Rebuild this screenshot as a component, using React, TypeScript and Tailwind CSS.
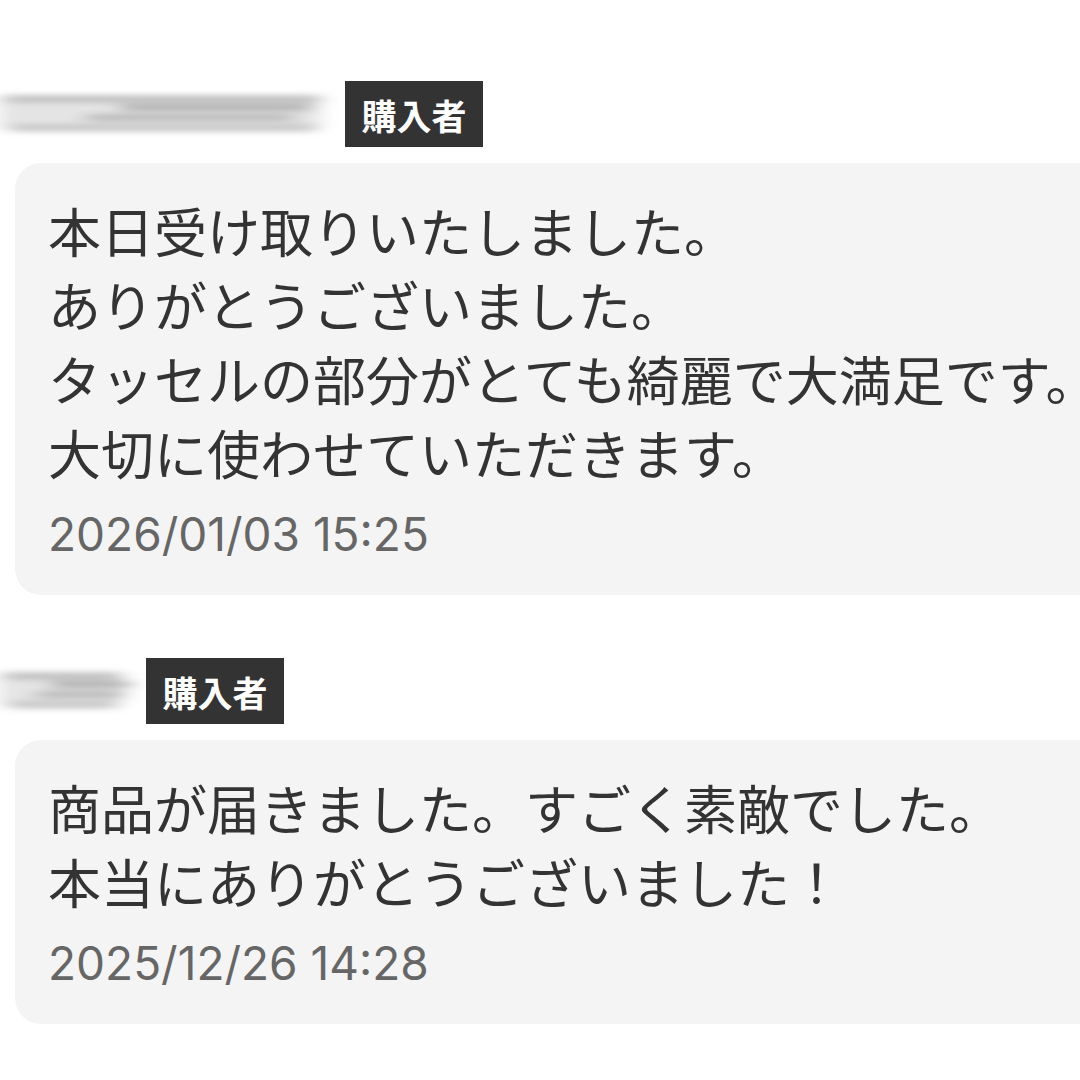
import React from 'react';

type Review = {
  nameWidth: number;
  lines: string[];
  date: string;
};

const reviews: Review[] = [
  {
    nameWidth: 345,
    lines: [
      '本日受け取りいたしました。',
      'ありがとうございました。',
      'タッセルの部分がとても綺麗で大満足です。',
      '大切に使わせていただきます。',
    ],
    date: '2026/01/03 15:25',
  },
  {
    nameWidth: 146,
    lines: ['商品が届きました。すごく素敵でした。', '本当にありがとうございました！'],
    date: '2025/12/26 14:28',
  },
];

// blurred-out user name (privacy smear)
const BlurredName: React.FC<{ width: number; id: string }> = ({ width, id }) => (
  <svg width={width} height={66} viewBox={`0 0 ${width} 66`} className="shrink-0">
    <defs>
      <filter id={id} x="-20%" y="-50%" width="140%" height="200%">
        <feGaussianBlur stdDeviation="10 3" />
      </filter>
    </defs>
    <g filter={`url(#${id})`}>
      <rect x={0} y={14} width={width - 25} height={34} fill="#e4e4e4" />
      <rect x={5} y={15} width={width - 30} height={6} fill="#b5b5b5" />
      <rect x={width * 0.35} y={24} width={width * 0.55} height={5} fill="#9a9a9a" />
      <rect x={width * 0.25} y={34} width={width * 0.6} height={5} fill="#a5a5a5" />
      <rect x={10} y={44} width={width - 40} height={6} fill="#bdbdbd" />
    </g>
  </svg>
);

const Badge: React.FC = () => (
  <div className="flex h-[66px] w-[138px] shrink-0 items-center justify-center bg-[#333333] text-[35px] font-bold leading-none text-white">
    購入者
  </div>
);

const App: React.FC = () => {
  return (
    <div
      className="h-[1080px] w-[1080px] overflow-hidden bg-white pt-[81px]"
      style={{ fontFamily: '"Noto Sans CJK JP", "Noto Sans", sans-serif' }}
    >
      {reviews.map((r, i) => (
        <div key={i} className={i > 0 ? 'mt-[63px]' : ''}>
          <div className="flex items-center">
            <BlurredName width={r.nameWidth} id={`blur${i}`} />
            <Badge />
          </div>
          <div className="ml-[15px] mt-[16px] w-[1120px] rounded-[26px] bg-[#f4f4f4] pb-[33px] pl-[33px] pt-[30px]">
            {r.lines.map((l, j) => (
              <div key={j} className="whitespace-nowrap text-[53px] leading-[74px] text-[#333333]">
                {l}
              </div>
            ))}
            <div
              className="mt-[17px] text-[46px] leading-[56px] text-[#666666]"
              style={{ fontFamily: 'Inter, "Noto Sans", sans-serif' }}
            >
              {r.date}
            </div>
          </div>
        </div>
      ))}
    </div>
  );
};

export default App;
